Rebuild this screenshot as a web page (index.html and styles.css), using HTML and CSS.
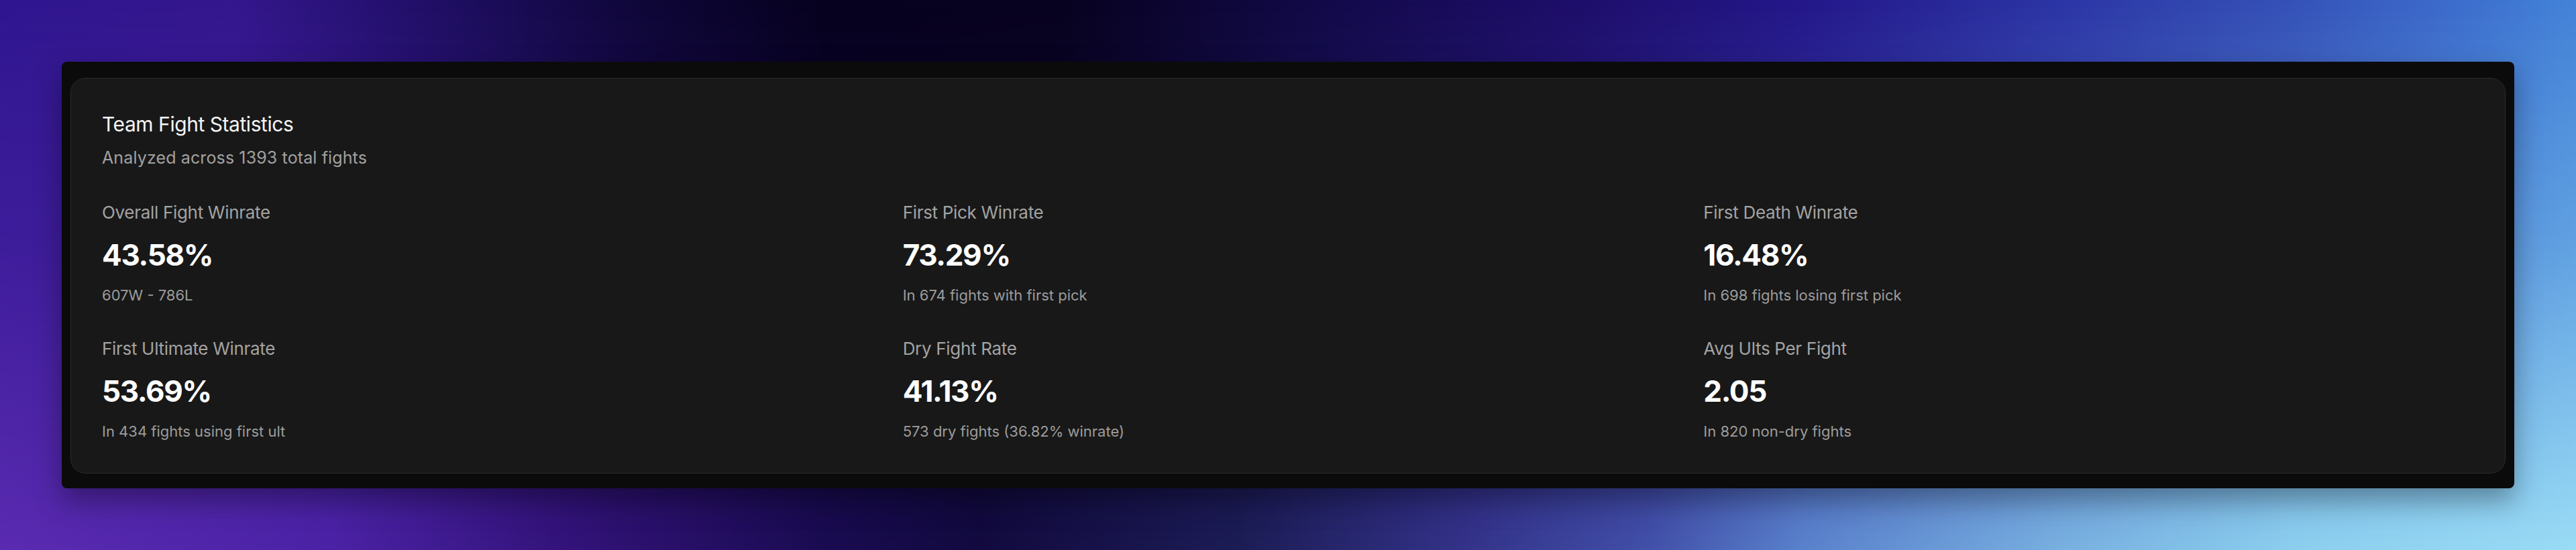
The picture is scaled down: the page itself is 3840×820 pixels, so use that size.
FILE: index.html
```html
<!DOCTYPE html>
<html lang="en">
<head>
    <meta charset="UTF-8">
    <meta name="viewport" content="width=device-width, initial-scale=1.0">
    <title>Team Fight Statistics</title>
    <link rel="stylesheet" href="styles.css">
</head>
<body>
    <div class="backdrop"></div>
    <div class="frame">
        <div class="card">
            <h2 class="card-title">Team Fight Statistics</h2>
            <p class="card-subtitle">Analyzed across 1393 total fights</p>

            <div class="stats">
                <div class="stat">
                    <div class="stat-label">Overall Fight Winrate</div>
                    <div class="stat-value">43.58%</div>
                    <div class="stat-note">607W - 786L</div>
                </div>
                <div class="stat">
                    <div class="stat-label">First Pick Winrate</div>
                    <div class="stat-value">73.29%</div>
                    <div class="stat-note">In 674 fights with first pick</div>
                </div>
                <div class="stat">
                    <div class="stat-label">First Death Winrate</div>
                    <div class="stat-value">16.48%</div>
                    <div class="stat-note">In 698 fights losing first pick</div>
                </div>
                <div class="stat">
                    <div class="stat-label">First Ultimate Winrate</div>
                    <div class="stat-value">53.69%</div>
                    <div class="stat-note">In 434 fights using first ult</div>
                </div>
                <div class="stat">
                    <div class="stat-label">Dry Fight Rate</div>
                    <div class="stat-value">41.13%</div>
                    <div class="stat-note">573 dry fights (36.82% winrate)</div>
                </div>
                <div class="stat">
                    <div class="stat-label">Avg Ults Per Fight</div>
                    <div class="stat-value">2.05</div>
                    <div class="stat-note">In 820 non-dry fights</div>
                </div>
            </div>
        </div>
    </div>
</body>
</html>
```

FILE: styles.css
```css
html, body {
    margin: 0;
    height: 820px;
}
body {
    position: relative;
    overflow: hidden;
    padding: 92px;
    box-sizing: border-box;
    font-family: Inter, "Noto Sans", sans-serif;
    background: linear-gradient(90deg,
        #2f1690 0%,
        #34178e 9%,
        #22106a 16%,
        #0f0738 25%,
        #07021f 32%,
        #08031f 41%,
        #120a48 51%,
        #1e0e6a 61%,
        #24178a 70%,
        #2c35a5 80%,
        #3552b8 89%,
        #3d6fce 96%,
        #4383d8 100%);
}
.backdrop {
    position: absolute;
    inset: 0;
    background: linear-gradient(90deg,
        #5a2bb0 0%,
        #4b22a5 13%,
        #33137a 22%,
        #1a0b52 32%,
        #120a40 38%,
        #1c1c55 48%,
        #34338a 57%,
        #4250a8 64%,
        #5a82cc 70%,
        #78b0e0 80%,
        #8ccfee 89%,
        #9adcf5 100%);
    -webkit-mask-image: linear-gradient(180deg, transparent 0%, rgba(0, 0, 0, 0.35) 45%, #000 100%);
    mask-image: linear-gradient(180deg, transparent 0%, rgba(0, 0, 0, 0.35) 45%, #000 100%);
}
.frame {
    position: relative;
    background: #0b0b0b;
    border-radius: 8px;
    padding: 24px 13px 22px;
    box-shadow: 0 18px 40px rgba(0, 0, 0, 0.35);
}
.card {
    background: #181818;
    border: 1px solid #2a2a2a;
    border-radius: 22px;
    padding: 48px 46px 46px;
    color: #f2f2f2;
}
.card-title {
    margin: 0;
    font-size: 30px;
    line-height: 40px;
    font-weight: 400;
    letter-spacing: -0.015em;
    color: #f4f4f4;
}
.card-subtitle {
    margin: 12px 0 0;
    font-size: 25px;
    line-height: 36px;
    letter-spacing: 0.005em;
    color: #a1a1a1;
}
.stats {
    display: grid;
    grid-template-columns: repeat(3, 1fr);
    column-gap: 45px;
    row-gap: 46px;
    margin-top: 46px;
}
.stat-label {
    font-size: 26px;
    line-height: 36px;
    letter-spacing: -0.012em;
    color: #a3a3a3;
}
.stat-value {
    margin-top: 17px;
    font-size: 44px;
    line-height: 56px;
    font-weight: 700;
    letter-spacing: -0.03em;
    color: #ffffff;
}
.stat-note {
    margin-top: 16px;
    font-size: 22px;
    line-height: 32px;
    color: #9c9c9c;
}
```
